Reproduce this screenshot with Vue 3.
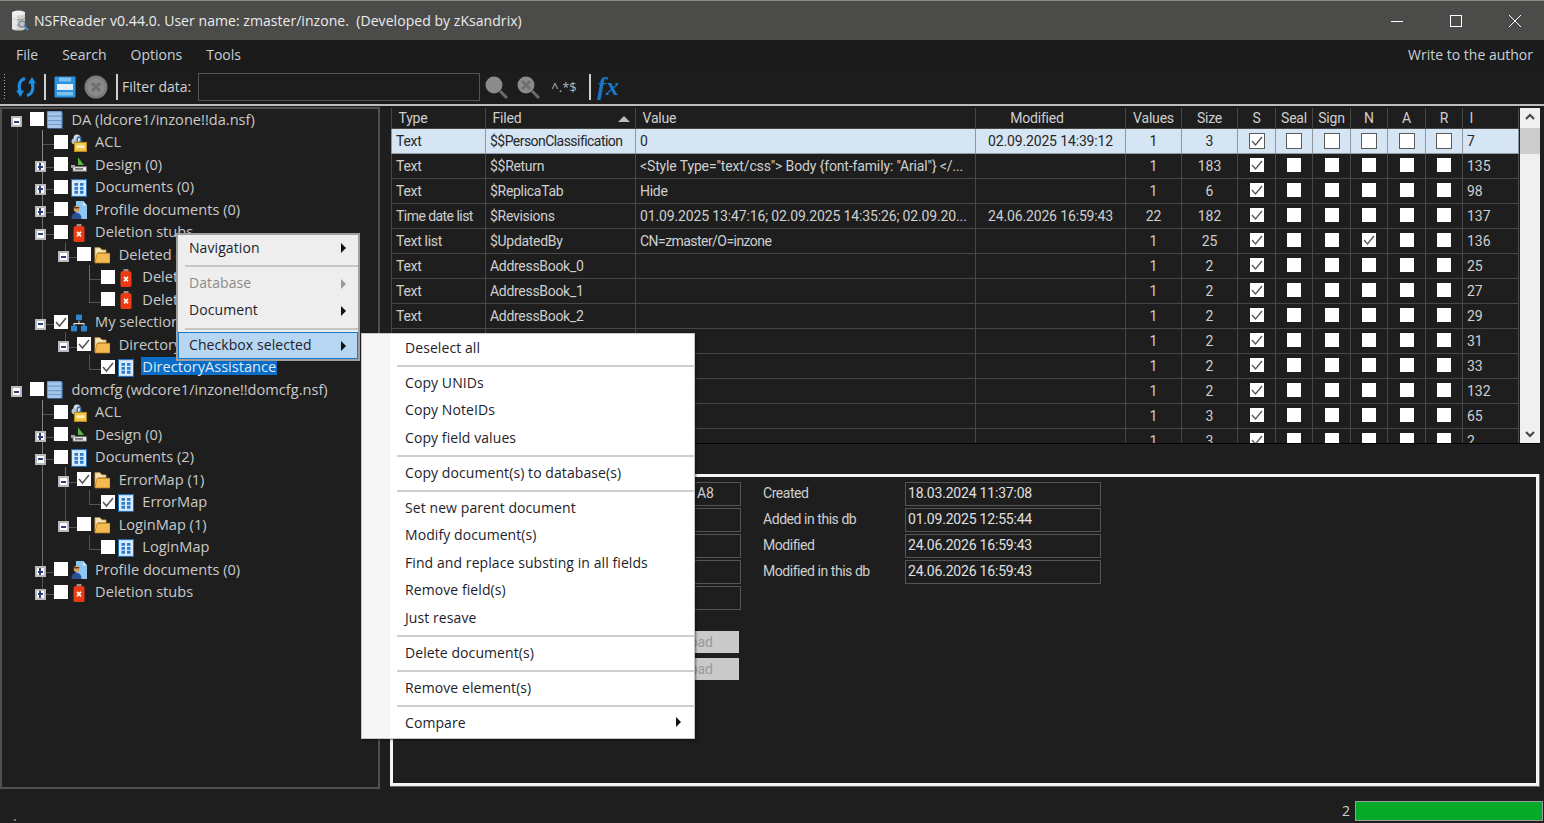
<script setup>
const titleText = 'NSFReader v0.44.0. User name: zmaster/inzone.\u00a0\u00a0(Developed by zKsandrix)'
const treeRows = [
  { l: 0, t: 'DA (ldcore1/inzone!!da.nsf)', i: 'db', e: '-' },
  { l: 1, t: 'ACL', i: 'acl' },
  { l: 1, t: 'Design (0)', i: 'design', e: '+' },
  { l: 1, t: 'Documents (0)', i: 'doc', e: '+' },
  { l: 1, t: 'Profile documents (0)', i: 'profile', e: '+' },
  { l: 1, t: 'Deletion stubs', i: 'del', e: '-' },
  { l: 2, t: 'Deleted (2)', i: 'folder', e: '-' },
  { l: 3, t: 'Deleted', i: 'del' },
  { l: 3, t: 'Deleted', i: 'del' },
  { l: 1, t: 'My selection (1)', i: 'net', e: '-', c: true },
  { l: 2, t: 'Directory (1)', i: 'folder', e: '-', c: true },
  { l: 3, t: 'DirectoryAssistance', i: 'doc', c: true, s: true },
  { l: 0, t: 'domcfg (wdcore1/inzone!!domcfg.nsf)', i: 'db', e: '-' },
  { l: 1, t: 'ACL', i: 'acl' },
  { l: 1, t: 'Design (0)', i: 'design', e: '+' },
  { l: 1, t: 'Documents (2)', i: 'doc', e: '-' },
  { l: 2, t: 'ErrorMap (1)', i: 'folder', e: '-', c: true },
  { l: 3, t: 'ErrorMap', i: 'doc', c: true },
  { l: 2, t: 'LoginMap (1)', i: 'folder', e: '-' },
  { l: 3, t: 'LoginMap', i: 'doc' },
  { l: 1, t: 'Profile documents (0)', i: 'profile', e: '+' },
  { l: 1, t: 'Deletion stubs', i: 'del', e: '+' },
]
const guide = (l) => 16 + 23.6 * l
const rowY = (i) => 11.5 + 22.5 * i
const treeLines = []
treeRows.forEach((r, i) => {
  if (r.l === 0) return
  let p = i - 1
  while (treeRows[p].l >= r.l) p--
  const x = Math.round(guide(r.l)) + 0.5
  const y = Math.round(rowY(i)) + 1.5
  treeLines.push(`M${x} ${y}H${x + 15}`)
  treeLines.push(`M${x} ${Math.round(rowY(p)) + 9.5}V${y}`)
})
const rootLines = 'M15.5 18V282'

const cols = [
  ['Type', 94, 'l'], ['Filed', 150, 'l'], ['Value', 340, 'l'], ['Modified', 150, 'c'],
  ['Values', 56, 'c'], ['Size', 56, 'c'], ['S', 38, 'c'], ['Seal', 37, 'c'], ['Sign', 38, 'c'],
  ['N', 37, 'c'], ['A', 38, 'c'], ['R', 37, 'c'], ['I', 56, 'l'],
]
const gridRows = [
  ['Text', '$$PersonClassification', '0', '02.09.2025 14:39:12', 1, 3, 7, 'S'],
  ['Text', '$$Return', '<Style Type="text/css"> Body {font-family: "Arial"} </...', '', 1, 183, 135, 'S'],
  ['Text', '$ReplicaTab', 'Hide', '', 1, 6, 98, 'S'],
  ['Time date list', '$Revisions', '01.09.2025 13:47:16; 02.09.2025 14:35:26; 02.09.20...', '24.06.2026 16:59:43', 22, 182, 137, 'S'],
  ['Text list', '$UpdatedBy', 'CN=zmaster/O=inzone', '', 1, 25, 136, 'SN'],
  ['Text', 'AddressBook_0', '', '', 1, 2, 25, 'S'],
  ['Text', 'AddressBook_1', '', '', 1, 2, 27, 'S'],
  ['Text', 'AddressBook_2', '', '', 1, 2, 29, 'S'],
  ['', '', '', '', 1, 2, 31, 'S'],
  ['', '', '', '', 1, 2, 33, 'S'],
  ['', '', '', '', 1, 2, 132, 'S'],
  ['', '', '', '', 1, 3, 65, 'S'],
  ['', '', '', '', 1, 3, 2, 'S'],
]
const flags = ['S', 'Seal', 'Sign', 'N', 'A', 'R']
const isChecked = (row, f) => (f === 'N' ? row[7].includes('N') : f === 'S')
const tracking = (v) => {
  if (v === 'Time date list' || v === '$$PersonClassification' || v.startsWith('CN=')) return 'tighter'
  if (/^[0-9<]/.test(v)) return 'loose'
  return 'tight'
}

const dates = [
  ['Created', '18.03.2024 11:37:08'],
  ['Added in this db', '01.09.2025 12:55:44'],
  ['Modified', '24.06.2026 16:59:43'],
  ['Modified in this db', '24.06.2026 16:59:43'],
]
const subMenu = [
  ['Deselect all'], null,
  ['Copy UNIDs'], ['Copy NoteIDs'], ['Copy field values'], null,
  ['Copy document(s) to database(s)'], null,
  ['Set new parent document'], ['Modify document(s)'], ['Find and replace substing in all fields'],
  ['Remove field(s)'], ['Just resave'], null,
  ['Delete document(s)'], null,
  ['Remove element(s)'], null,
  ['Compare', true],
]
</script>

<template>
  <div class="win">
    <svg class="sprite" width="0" height="0" aria-hidden="true">
      <defs>
        <symbol id="db" viewBox="0 0 16 16" preserveAspectRatio="none">
          <rect x="0" y="0" width="15" height="15.500" rx="1" fill="#6f9ccc" />
          <path d="M1 1h13v3H1zM1 5h13v3H1zM1 9h13v2.500H1zM1 12.500h13V15H1z" fill="#a5c6e8" />
          <path d="M15 1h1v15H1v-.5h14z" fill="#3d5f88" />
        </symbol>
        <symbol id="acl" viewBox="0 0 16 16" preserveAspectRatio="none">
          <circle cx="6" cy="4" r="3.500" fill="#d3deea" />
          <circle cx="3" cy="6.500" r="2.500" fill="#b4c8dc" />
          <path d="M5.500 7V4.500a2.500 2.500 0 0 1 5 0V7H9V4.500a1 1 0 0 0-2 0V7z" fill="#3f6fa8" />
          <rect x="3.500" y="7.500" width="12" height="8" fill="#f2c64a" stroke="#b98a1d" />
          <rect x="5.500" y="10" width="8" height="2.500" fill="#fdeeb5" />
        </symbol>
        <symbol id="design" viewBox="0 0 16 16" preserveAspectRatio="none">
          <path d="M7 1l6 7H7z" fill="#55b53c" />
          <rect x="2" y="9.500" width="13.500" height="4" fill="#ececec" stroke="#777" stroke-width=".8" />
          <rect x="0" y="8" width="4" height="2.500" fill="#a8a8a8" />
          <path d="M4 11.500h8" stroke="#333" />
        </symbol>
        <symbol id="doc" viewBox="0 0 16 16" preserveAspectRatio="none">
          <rect x="0.500" y="0.500" width="15" height="15" fill="#d9eafa" stroke="#1f6fbc" />
          <path d="M3.500 3.500h3.500v2.500H3.500zM9 3.500h3.500v2.500H9zM3.500 7h3.500v2.500H3.500zM9 7h3.500v2.500H9zM3.500 10.500h3.500V13H3.500zM9 10.500h3.500V13H9z" fill="#2a7cca" />
        </symbol>
        <symbol id="profile" viewBox="0 0 16 16" preserveAspectRatio="none">
          <path d="M5 0h7l4 4v12H5z" fill="#8bc8f0" />
          <path d="M12 0l4 4h-4z" fill="#d6ecfb" />
          <circle cx="5.500" cy="7" r="2.800" fill="#d89a5c" />
          <path d="M2.700 5.500h5.600v1H2.700z" fill="#3a2a1a" />
          <path d="M0.500 16c0-3.500 2-5.500 5-5.500s5 2 5 5.500z" fill="#2c4f9a" />
        </symbol>
        <symbol id="del" viewBox="0 0 16 16" preserveAspectRatio="none">
          <rect x="5.500" y="0" width="5" height="3" fill="#a08c80" />
          <rect x="2.500" y="2" width="11" height="14" rx="1.500" fill="#ee3a12" />
          <path d="M6 7l4 4M10 7l-4 4" stroke="#fff" stroke-width="1.600" />
        </symbol>
        <symbol id="folder" viewBox="0 0 16 16" preserveAspectRatio="none">
          <path d="M1 14V1.500h5l2 2h4v2.500H4L1 14z" fill="#f5e3b8" stroke="#cf9f44" stroke-width="0.800" />
          <path d="M1 15l2-8.500h13V15z" fill="#f4b94f" stroke="#c98a25" stroke-width="0.800" />
        </symbol>
        <symbol id="net" viewBox="0 0 16 16" preserveAspectRatio="none">
          <rect x="5" y="0.500" width="6" height="5" fill="#2f84cc" />
          <rect x="0" y="10.500" width="6" height="5" fill="#2f84cc" />
          <rect x="10" y="10.500" width="6" height="5" fill="#2f84cc" />
          <path d="M8 6v2.500M3 10.500V8.500h10v2" fill="none" stroke="#ddd" />
        </symbol>
      </defs>
    </svg>

    <header class="title">
      <svg class="appicon" width="18" height="22" viewBox="0 0 18 22">
        <rect x="1" y="2" width="13" height="17" fill="#cfcfcf" />
        <ellipse cx="7.500" cy="3" rx="6.500" ry="2.500" fill="#efefef" />
        <path d="M1 8c2 2.500 11 2.500 13 0M1 13.500c2 2.500 11 2.500 13 0" fill="none" stroke="#8f8f8f" />
        <path d="M1 19c2 2 11 2 13 0" fill="#cfcfcf" />
        <rect x="1" y="3" width="5" height="16" fill="#f3f3f3" opacity=".7" />
        <circle cx="11" cy="14" r="3.200" fill="#b8c4cf" stroke="#66717c" />
        <path d="M13.500 16.500l3.500 3.500" stroke="#3d97da" stroke-width="1.800" />
      </svg>
      <span class="title-text">{{ titleText }}</span>
      <div class="winbtns">
        <svg width="14" height="14" viewBox="0 0 14 14"><path d="M1 7.500h12" stroke="#fff" /></svg>
        <svg width="14" height="14" viewBox="0 0 14 14"><rect x="1.500" y="1.500" width="11" height="11" fill="none" stroke="#fff" /></svg>
        <svg width="14" height="14" viewBox="0 0 14 14"><path d="M1 1l12 12M13 1L1 13" stroke="#fff" /></svg>
      </div>
    </header>

    <nav class="menubar">
      <span>File</span><span>Search</span><span>Options</span><span>Tools</span>
      <span class="author">Write to the author</span>
    </nav>

    <div class="toolbar">
      <i class="grip"></i>
      <svg class="refresh" width="24" height="24" viewBox="0 0 24 24" fill="none" stroke="#1c8fe6" stroke-width="3">
        <path d="M11 3.500C5.500 5 4 10 6 17" />
        <path d="M2 15.500h8l-3.500 6.500z" fill="#1c8fe6" stroke="none" />
        <path d="M13 20.500C18.500 19 20 14 18 7" />
        <path d="M14 8.500h8L18 2z" fill="#1c8fe6" stroke="none" />
      </svg>
      <i class="sep s1"></i>
      <svg class="save" width="22" height="22" viewBox="0 0 22 22">
        <rect x="0.500" y="0.500" width="21" height="21" rx="1" fill="#2b93df" />
        <rect x="5" y="1.500" width="12" height="4" fill="#7ec0ef" />
        <rect x="3" y="8" width="16" height="6" fill="#e4f1fb" />
        <rect x="3" y="16" width="16" height="3.500" fill="#7ec0ef" />
      </svg>
      <svg class="stop" width="24" height="24" viewBox="0 0 24 24">
        <circle cx="12" cy="12" r="11.500" fill="#7b7b7b" />
        <circle cx="12" cy="12" r="9" fill="#8a8a8a" />
        <path d="M8 8l8 8M16 8l-8 8" stroke="#6f6f6f" stroke-width="3" />
      </svg>
      <i class="sep s2"></i>
      <label class="filter-label">Filter data:</label>
      <div class="filter-input"></div>
      <svg class="mag m1" width="24" height="24" viewBox="0 0 24 24">
        <circle cx="10" cy="10" r="8.500" fill="#8b8b8b" />
        <path d="M16 16l7 7" stroke="#6b6b6b" stroke-width="3" />
      </svg>
      <svg class="mag m2" width="24" height="24" viewBox="0 0 24 24">
        <circle cx="10" cy="10" r="8.500" fill="#8b8b8b" />
        <path d="M6 6l8 8M14 6l-8 8" stroke="#6e6e6e" stroke-width="2.500" />
        <path d="M16 16l7 7" stroke="#6b6b6b" stroke-width="3" />
      </svg>
      <span class="regex">^.*$</span>
      <i class="sep s3"></i>
      <span class="fx">fx</span>
    </div>
    <div class="rule"></div>

    <main class="main">
      <aside class="tree">
        <svg class="tree-lines" width="376" height="500">
          <path :d="rootLines" fill="none" stroke="#4c4c4c" stroke-dasharray="1 1" />
          <path :d="treeLines.join('')" fill="none" stroke="#8a8a8a" stroke-dasharray="1 1" />
        </svg>
        <div v-for="(r, i) in treeRows" :key="i" class="node" :style="{ paddingLeft: 23.6 * r.l + 'px' }">
          <span class="exp" :class="{ vis: r.e }">
            <template v-if="r.e">
              <i class="h"></i><i v-if="r.e === '+'" class="v"></i>
            </template>
          </span>
          <span class="cb">
            <svg v-if="r.c" width="14" height="14" viewBox="0 0 14 14"><path d="M2 7l3.500 4L12 3" fill="none" stroke="#555" stroke-width="1.500" /></svg>
          </span>
          <svg class="ico" width="16" height="18"><use :href="'#' + r.i" width="16" height="18" /></svg>
          <span class="lbl" :class="{ sel: r.s }">{{ r.t }}</span>
        </div>
      </aside>

      <section class="right">
        <div class="gridwrap">
          <div class="gridclip">
            <table class="grid">
              <colgroup><col v-for="c in cols" :key="c[0]" :style="{ width: c[1] + 'px' }" /></colgroup>
              <thead>
                <tr>
                  <th v-for="c in cols" :key="c[0]" :class="[c[2], { mod: c[0] === 'Modified' }]">
                    {{ c[0] }}
                    <i v-if="c[0] === 'Filed'" class="sort"></i>
                  </th>
                </tr>
              </thead>
              <tbody>
                <tr v-for="(row, ri) in gridRows" :key="ri" :class="{ cur: ri === 0 }">
                  <td class="l" :class="tracking(row[0])">{{ row[0] }}</td>
                  <td class="l" :class="tracking(row[1])">{{ row[1] }}</td>
                  <td class="l" :class="tracking(row[2])">{{ row[2] }}</td>
                  <td class="c loose">{{ row[3] }}</td>
                  <td class="c">{{ row[4] }}</td>
                  <td class="c">{{ row[5] }}</td>
                  <td v-for="f in flags" :key="f" class="c">
                    <span class="gcb">
                      <svg v-if="isChecked(row, f)" width="14" height="14" viewBox="0 0 14 14"><path d="M2 7l3.500 4L12 3" fill="none" stroke="#555" stroke-width="1.300" /></svg>
                    </span>
                  </td>
                  <td class="l">{{ row[6] }}</td>
                </tr>
              </tbody>
            </table>
          </div>
          <div class="sbar">
            <svg width="20" height="18" viewBox="0 0 20 18"><path d="M6 11l4-4 4 4" fill="none" stroke="#444" stroke-width="2" /></svg>
            <i class="thumb"></i>
            <span class="sfill"></span>
            <svg width="20" height="18" viewBox="0 0 20 18"><path d="M6 7l4 4 4-4" fill="none" stroke="#444" stroke-width="2" /></svg>
          </div>
        </div>

        <div class="detail">
          <div class="fields">
            <div class="fbox">A8</div>
            <div class="fbox"></div>
            <div class="fbox"></div>
            <div class="fbox"></div>
            <div class="fbox"></div>
            <button class="fbtn">Load</button>
            <button class="fbtn">Load</button>
          </div>
          <div class="dates">
            <template v-for="d in dates" :key="d[0]">
              <span class="dlabel">{{ d[0] }}</span>
              <span class="dbox">{{ d[1] }}</span>
            </template>
          </div>
        </div>
      </section>
    </main>

    <footer class="status">
      <span class="dot">.</span>
      <span class="count">2</span>
      <div class="bar"></div>
    </footer>

    <div class="menu m-main">
      <div class="mi first"><span>Navigation</span><i class="arr"></i></div>
      <div class="ms"></div>
      <div class="mi off"><span>Database</span><i class="arr"></i></div>
      <div class="mi"><span>Document</span><i class="arr"></i></div>
      <div class="ms"></div>
      <div class="mi hot"><span>Checkbox selected</span><i class="arr"></i></div>
    </div>

    <div class="menu m-sub">
      <template v-for="(m, i) in subMenu" :key="i">
        <div v-if="m" class="si"><span>{{ m[0] }}</span><i v-if="m[1]" class="arr"></i></div>
        <div v-else class="ss"></div>
      </template>
    </div>
  </div>
</template>

<style>
html, body { margin: 0; background: #1e1e1e; }
</style>

<style scoped>
.win { position: relative; width: 1544px; height: 823px; overflow: hidden; background: #1e1e1e; color: #d8d8d8; font-family: "Open Sans", "Noto Sans", sans-serif; font-size: 14px; display: flex; flex-direction: column; }
.sprite { position: absolute; }
.title { height: 39px; flex: none; background: #4b4b49; border-top: 1px solid #8a8a88; display: flex; align-items: center; padding-left: 11px; color: #ececec; }
.appicon { margin-right: 5px; }
.title-text { letter-spacing: .05px; margin-top: -1px; }
.winbtns { margin-left: auto; display: flex; gap: 45px; margin-right: 22px; }
.menubar { height: 30px; flex: none; box-sizing: border-box; padding-bottom: 2px; background: #1b1b1b; display: flex; align-items: center; padding-left: 16px; gap: 24px; color: #c8d0d8; }
.author { margin-left: auto; margin-right: 11px; }
.toolbar { height: 34px; flex: none; display: flex; align-items: center; background: #1c1c1c; }
.grip { width: 3px; height: 28px; margin-left: 3px; background-image: radial-gradient(#aaa 1px, transparent 1px); background-size: 3px 3px; }
.refresh { margin-left: 8px; }
.sep { width: 2px; height: 26px; background: #cfcfcf; }
.s1 { margin-left: 6px; }
.save { margin-left: 8px; }
.stop { margin-left: 8px; }
.s2 { margin-left: 8px; }
.filter-label { margin-left: 4px; margin-top: -2px; color: #d0d0d0; white-space: nowrap; }
.filter-input { margin-left: 7px; width: 280px; height: 26px; border: 1px solid #555; }
.m1 { margin-left: 4px; }
.m2 { margin-left: 8px; }
.regex { margin-left: 11px; color: #b8b8b8; font-size: 13px; width: 30px; }
.s3 { margin-left: 8px; }
.fx { margin-left: 6px; color: #1b74c4; font: italic bold 26px "Liberation Serif", serif; line-height: 26px; }
.rule { height: 2px; flex: none; background: #bdbdbd; }

.main { flex: 1; display: flex; min-height: 0; }
.tree { position: relative; width: 376px; flex: none; margin-top: 1px; border: 2px solid #505050; height: 678px; overflow: hidden; box-sizing: content-box; }
.tree-lines { position: absolute; left: 0; top: 0; }
.node { position: relative; height: 22.5px; display: flex; align-items: center; white-space: nowrap; color: #c9c9c9; font-size: 14.6px; }
.exp { width: 11px; height: 11px; margin: 3px 8px 0 9px; flex: none; position: relative; box-sizing: border-box; }
.exp.vis { background: #fff; border: 2px solid #b9b9b9; }
.exp .h { position: absolute; left: 1px; right: 1px; top: 2.500px; height: 2px; background: #2a3f7a; }
.exp .v { position: absolute; top: 0; bottom: 0; left: 2.500px; width: 2px; background: #2a3f7a; }
.cb { width: 14px; height: 14px; margin-top: -2px; background: #fff; flex: none; }
.cb svg { display: block; }
.ico { margin-left: 3px; margin-right: 7.500px; flex: none; }
.lbl { padding: 0 1px; line-height: 18px; margin-top: -3px; }
.lbl.sel { background: #0a6ec8; color: #dfe9f2; }

.right { flex: 1; margin-left: 10px; min-width: 0; }
.gridwrap { height: 336px; margin-top: 2px; display: flex; border-bottom: 1px solid #000; margin-right: 4px; box-sizing: border-box; }
.gridclip { width: 1129px; margin-left: 1px; overflow: hidden; flex: none; height: 335px; }
.grid { table-layout: fixed; border-collapse: collapse; width: 1128px; font-family: Roboto, sans-serif; font-size: 14px; color: #cfcfcf; }
.grid th { height: 20px; padding: 0 5px; font-weight: 400; border: 1px solid #474747; border-top: 0; position: relative; box-sizing: border-box; overflow: hidden; letter-spacing: -.2px; }
.grid th.l { text-align: left; padding-left: 6.500px; }
.grid th.mod { padding-right: 32px; }
.grid td { height: 25px; padding: 0 4px; border: 1px solid #474747; white-space: nowrap; overflow: hidden; box-sizing: border-box; }
.grid .c { text-align: center; }
.grid .l { text-align: left; }
.grid .tight { letter-spacing: -.3px; }
.grid .tighter { letter-spacing: -.55px; }
.grid .loose { letter-spacing: -.14px; }
.sort { position: absolute; right: 5px; top: 8px; width: 0; height: 0; border: 6px solid transparent; border-top: 0; border-bottom-color: #bcbcbc; }
.grid tr.cur td { background: #d6e5f3; color: #262626; border-color: #8f979f; }
.gcb { display: inline-block; width: 14px; height: 14px; background: #fff; vertical-align: middle; margin-bottom: 2px; }
.gcb svg { display: block; }
.cur .gcb { box-sizing: border-box; width: 16px; height: 16px; background: #fff; border: 1px solid #5a5a5a; margin-bottom: 0; }
.sbar { width: 20px; background: #f0f0f0; display: flex; flex-direction: column; height: 335px; }
.thumb { height: 26px; background: #cdcdcd; display: block; margin-top: 2px; }
.sfill { flex: 1; }

.detail { margin-top: 30px; height: 313px; box-sizing: border-box; border: 1px solid #6a6a6a; border-width: 0 1px 1px 0; width: 1150px; background: #1e1e1e; box-shadow: inset 0 0 0 3px #f4f4f4; display: flex; padding: 8px 0 0 6px; }
.fields { width: 345px; flex: none; display: flex; flex-direction: column; gap: 2px; align-items: flex-end; }
.fbox { width: 100%; box-sizing: border-box; height: 24px; border: 1px solid #555; text-align: right; padding-right: 26px; line-height: 20px; font-family: Roboto, sans-serif; color: #cfcfcf; flex: none; }
.fbtn { flex: none; height: 22px; background: #c9c9c9; border: 0; color: #9a9a9a; font: 14px Roboto, sans-serif; text-align: right; padding: 0 26px 0 0; width: calc(100% - 2px); margin-right: 2px; }
.fbox + .fbtn { margin-top: 19px; }
.fbtn + .fbtn { margin-top: 3px; }
.dates { margin-left: 22px; display: grid; grid-template-columns: 142px 196px; grid-auto-rows: 24px; row-gap: 2px; align-content: start; font-family: Roboto, sans-serif; color: #cfcfcf; }
.dlabel { line-height: 22px; letter-spacing: -.45px; }
.dbox { border: 1px solid #555; padding-left: 2px; line-height: 20px; box-sizing: border-box; color: #e0e0e0; letter-spacing: -.2px; }

.status { height: 36px; flex: none; display: flex; align-items: center; position: relative; }
.dot { margin-left: 13px; margin-top: 20px; color: #aaa; }
.count { margin-left: auto; margin-right: 5px; margin-top: 10px; color: #c8d0d8; }
.bar { width: 186px; height: 18px; background: #05ab28; border: 1px solid #9c9c9c; margin-right: 1px; margin-top: 12px; }

.menu { position: absolute; box-sizing: border-box; color: #1d1d2b; letter-spacing: .08px; }
.arr { position: absolute; width: 0; height: 0; border-left: 5px solid #111; border-top: 5px solid transparent; border-bottom: 5px solid transparent; top: 50%; margin-top: -5px; }
.m-main { left: 176px; top: 233px; width: 184px; height: 128px; background: #eeeeee; border: 2px solid #9f9f9f; }
.mi { position: relative; height: 27px; line-height: 26px; padding-left: 11px; }
.mi.first { height: 26px; }
.mi .arr { right: 12px; }
.mi.off { color: #8c8c8c; }
.mi.off .arr { border-left-color: #999; }
.mi.hot { background: #b6d6f2; box-shadow: inset 0 0 0 1px #1b79c9; }
.ms { height: 2px; background: #c6c6c6; margin: 4px 0 3px 7px; }
.mi + .ms + .mi.hot { margin-top: -1px; }
.m-sub { left: 361px; top: 333px; width: 334px; height: 406px; background: linear-gradient(90deg, #f6f6f6 29px, #ffffff 29px); box-shadow: 1px 1px 2px rgba(0,0,0,.5), 0 0 0 1px #c8c8c8 inset; padding-top: .5px; }
.si { position: relative; height: 27.500px; line-height: 27px; padding-left: 44px; white-space: nowrap; }
.si .arr { right: 14px; }
.ss { height: 2px; margin: 3.750px 1px 1.750px 36px; background: #cfcfcf; }
</style>
